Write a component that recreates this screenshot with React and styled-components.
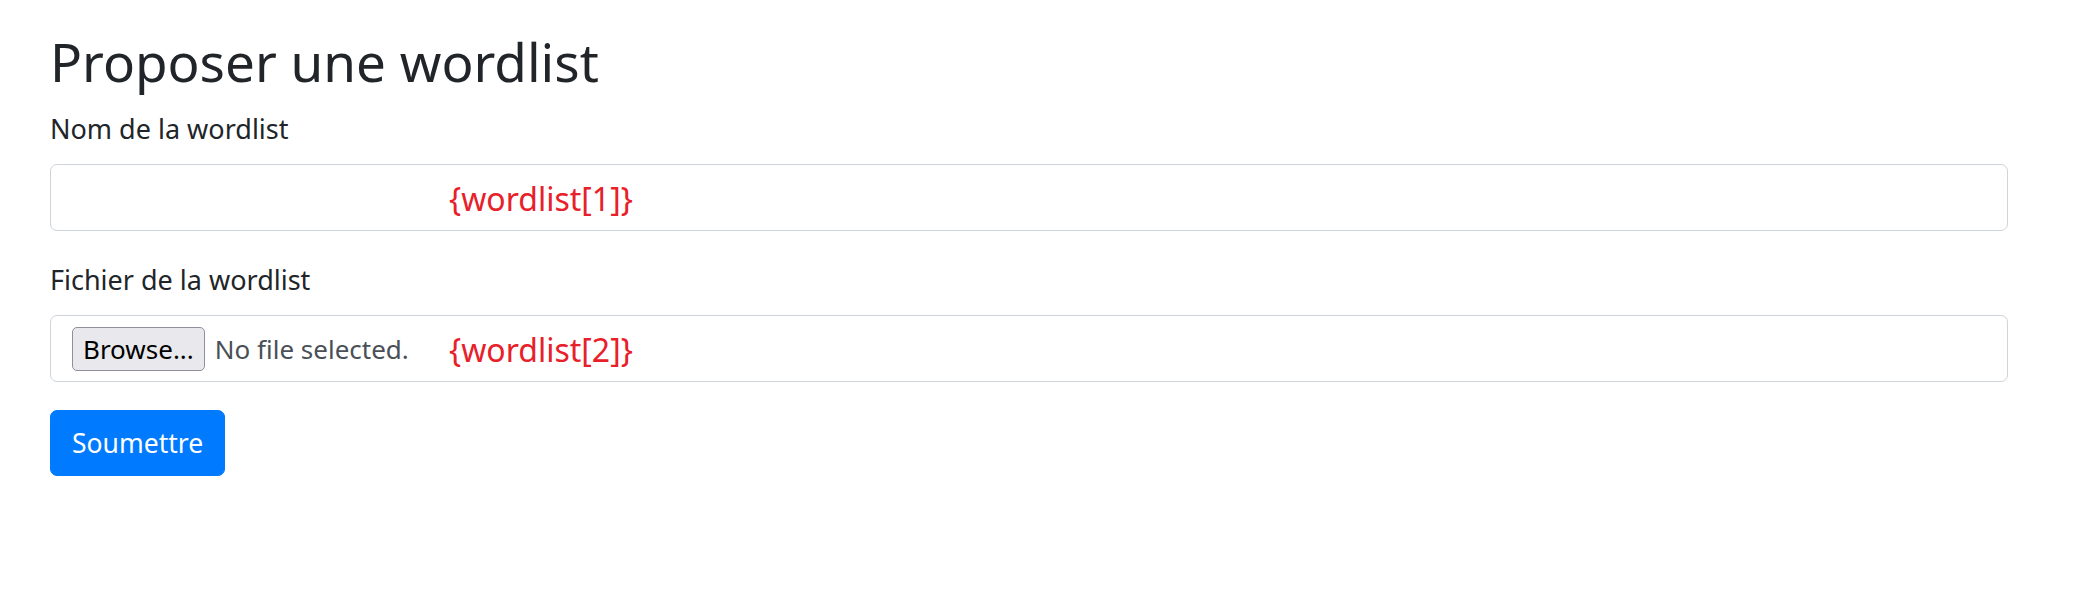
import React from 'react';
import styled, { createGlobalStyle } from 'styled-components';

const GlobalStyle = createGlobalStyle`
  html, body {
    margin: 0;
    padding: 0;
    background: #fff;
  }
  body {
    font-family: "Noto Sans", "Open Sans", sans-serif;
    color: #212529;
  }
`;

const Page = styled.div`
  padding: 29px 69px 0 50px;
`;

const Title = styled.h1`
  margin: 0 0 14px;
  font-size: 53px;
  font-weight: 400;
  line-height: 65px;
`;

const FormGroup = styled.div`
  margin-bottom: 28px;
`;

const Label = styled.label`
  display: block;
  margin-bottom: 14px;
  font-size: 27px;
  line-height: 42px;
`;

const Field = styled.div`
  position: relative;
  display: flex;
  align-items: center;
  box-sizing: border-box;
  height: 67px;
  padding: 0 21px;
  border: 1.5px solid #ced4da;
  border-radius: 7px;
  background: #fff;
  font-size: 26px;
  color: #495057;
`;

const TextInput = styled.input`
  flex: 1;
  border: 0;
  outline: none;
  background: transparent;
  font: inherit;
  color: inherit;
`;

const Annotation = styled.span`
  position: absolute;
  left: 398px;
  top: 50%;
  transform: translateY(-50%);
  font-size: 32px;
  color: #e8202a;
  pointer-events: none;
`;

const BrowseButton = styled.span`
  display: inline-flex;
  align-items: center;
  box-sizing: border-box;
  height: 44px;
  padding: 0 10px;
  border: 1.5px solid #8f8f9d;
  border-radius: 5px;
  background: #e9e9ed;
  color: #000;
  font-size: 26px;
`;

const FileName = styled.span`
  margin-left: 10px;
  color: #495057;
`;

const SubmitButton = styled.button`
  box-sizing: border-box;
  height: 66px;
  padding: 0 21px;
  border: 1.5px solid #007bff;
  border-radius: 7px;
  background: #007bff;
  color: #fff;
  font-family: inherit;
  font-size: 26.5px;
  cursor: pointer;
`;

export default function App() {
  return (
    <Page>
      <GlobalStyle />
      <Title>Proposer une wordlist</Title>
      <FormGroup>
        <Label htmlFor="name">Nom de la wordlist</Label>
        <Field>
          <TextInput id="name" type="text" />
          <Annotation>{'{wordlist[1]}'}</Annotation>
        </Field>
      </FormGroup>
      <FormGroup>
        <Label>Fichier de la wordlist</Label>
        <Field>
          <BrowseButton>Browse...</BrowseButton>
          <FileName>No file selected.</FileName>
          <Annotation>{'{wordlist[2]}'}</Annotation>
        </Field>
      </FormGroup>
      <SubmitButton type="submit">Soumettre</SubmitButton>
    </Page>
  );
}
